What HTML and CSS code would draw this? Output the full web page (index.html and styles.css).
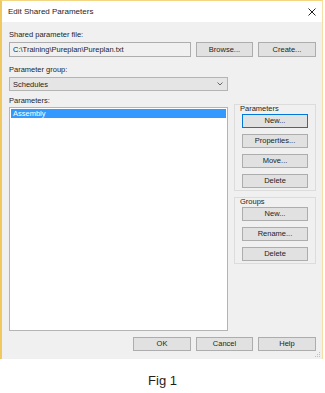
FILE: index.html
```html
<!doctype html>
<html>
<head>
    <meta charset="utf-8">
    <title>Edit Shared Parameters</title>
    <link rel="stylesheet" href="styles.css">
</head>
<body>
<div class="fenetre">
    <div class="titre">
        <span>Edit Shared Parameters</span>
        <svg class="fermer" width="8" height="8" viewBox="0 0 8 8">
            <path d="M0.5 0.5 L7.5 7.5 M7.5 0.5 L0.5 7.5" stroke="#222" stroke-width="1"/>
        </svg>
    </div>
    <div class="contenu">
        <div class="etiquette">Shared parameter file:</div>
        <div class="ligne-fichier">
            <div class="champ">C:\Training\Pureplan\Pureplan.txt</div>
            <div class="bouton b57">Browse...</div>
            <div class="bouton b58">Create...</div>
        </div>
        <div class="etiquette haut">Parameter group:</div>
        <div class="liste-deroulante">
            <span>Schedules</span>
            <svg width="6" height="4" viewBox="0 0 6 4">
                <path d="M0.5 0.5 L3 3 L5.5 0.5" fill="none" stroke="#666" stroke-width="1"/>
            </svg>
        </div>
        <div class="principal">
            <div class="gauche">
                <div class="etiquette-liste">Parameters:</div>
                <div class="liste">
                    <div class="element choisi">Assembly</div>
                </div>
            </div>
            <div class="droite">
                <div class="groupe">
                    <div class="legende">Parameters</div>
                    <div class="bouton defaut">New...</div>
                    <div class="bouton">Properties...</div>
                    <div class="bouton">Move...</div>
                    <div class="bouton">Delete</div>
                </div>
                <div class="groupe second">
                    <div class="legende">Groups</div>
                    <div class="bouton">New...</div>
                    <div class="bouton">Rename...</div>
                    <div class="bouton">Delete</div>
                </div>
            </div>
        </div>
        <div class="pied">
            <div class="bouton b58">OK</div>
            <div class="bouton b57">Cancel</div>
            <div class="bouton b58">Help</div>
        </div>
    </div>
    <svg class="poignee" width="6" height="6" viewBox="0 0 6 6">
        <rect x="4" y="0" width="1" height="1" fill="#c0c0c0"/>
        <rect x="2" y="2" width="1" height="1" fill="#c0c0c0"/>
        <rect x="4" y="2" width="1" height="1" fill="#c0c0c0"/>
        <rect x="0" y="4" width="1" height="1" fill="#c0c0c0"/>
        <rect x="2" y="4" width="1" height="1" fill="#c0c0c0"/>
        <rect x="4" y="4" width="1" height="1" fill="#c0c0c0"/>
    </svg>
</div>
<div class="legende-figure">Fig 1</div>
</body>
</html>
```

FILE: styles.css
```css
body {
    margin: 0;
    background: #fff;
    font-family: "Liberation Sans", Arial, sans-serif;
    font-size: 7.5px;
    color: #1e1e1e;
}

.fenetre {
    position: relative;
    width: 323px;
    box-sizing: border-box;
    background: #f0f0f0;
    border-top: 1px solid #f2d684;
    border-right: 1px solid #f4e0a6;
    border-left: 2px solid #efc95f;
}

.titre {
    height: 21px;
    background: #fff;
    display: flex;
    align-items: center;
    justify-content: space-between;
    padding: 0 6px;
    font-size: 8px;
}

.contenu {
    padding: 6px 6px 8px 7px;
}

.etiquette {
    height: 14px;
    line-height: 14px;
}

.haut {
    margin-top: 6px;
}

.ligne-fichier {
    display: flex;
    gap: 5px;
    height: 15px;
}

.champ {
    flex: 1;
    box-sizing: border-box;
    border: 1px solid #adadad;
    background: #f0f0f0;
    padding-left: 3px;
    line-height: 13px;
}

.bouton {
    box-sizing: border-box;
    height: 14px;
    line-height: 12px;
    text-align: center;
    background: #e1e1e1;
    border: 1px solid #adadad;
}

.ligne-fichier .bouton {
    height: 15px;
    line-height: 13px;
}

.b57 {
    width: 57px;
}

.b58 {
    width: 58px;
}

.defaut {
    border-color: #0078d7;
}

.liste-deroulante {
    width: 219px;
    height: 14px;
    box-sizing: border-box;
    border: 1px solid #b4b4b4;
    background: #e5e5e5;
    display: flex;
    align-items: center;
    justify-content: space-between;
    padding: 0 4px 0 3px;
}

.principal {
    display: flex;
    gap: 6px;
    margin-top: 4px;
}

.gauche {
    width: 219px;
}

.etiquette-liste {
    height: 12px;
    line-height: 12px;
}

.liste {
    height: 224px;
    box-sizing: border-box;
    border: 1px solid #b4b4b4;
    background: #fff;
    padding: 1px;
}

.element {
    height: 9px;
    line-height: 9px;
    padding-left: 2px;
}

.choisi {
    background: #3399ff;
    color: #fff;
}

.droite {
    flex: 1;
    margin-top: 9px;
}

.groupe {
    border: 1px solid #dcdcdc;
    padding: 0 7px 2px 7px;
    display: flex;
    flex-direction: column;
    gap: 6px;
}

.second {
    margin-top: 6px;
}

.legende {
    margin: -1px 0 -6px -2px;
    height: 10px;
    line-height: 9px;
}

.pied {
    display: flex;
    justify-content: flex-end;
    gap: 5px;
    margin-top: 6px;
}

.poignee {
    position: absolute;
    right: 1px;
    bottom: 1px;
}

.legende-figure {
    margin-top: 13px;
    text-align: center;
    font-size: 13px;
    line-height: 18px;
}
```
